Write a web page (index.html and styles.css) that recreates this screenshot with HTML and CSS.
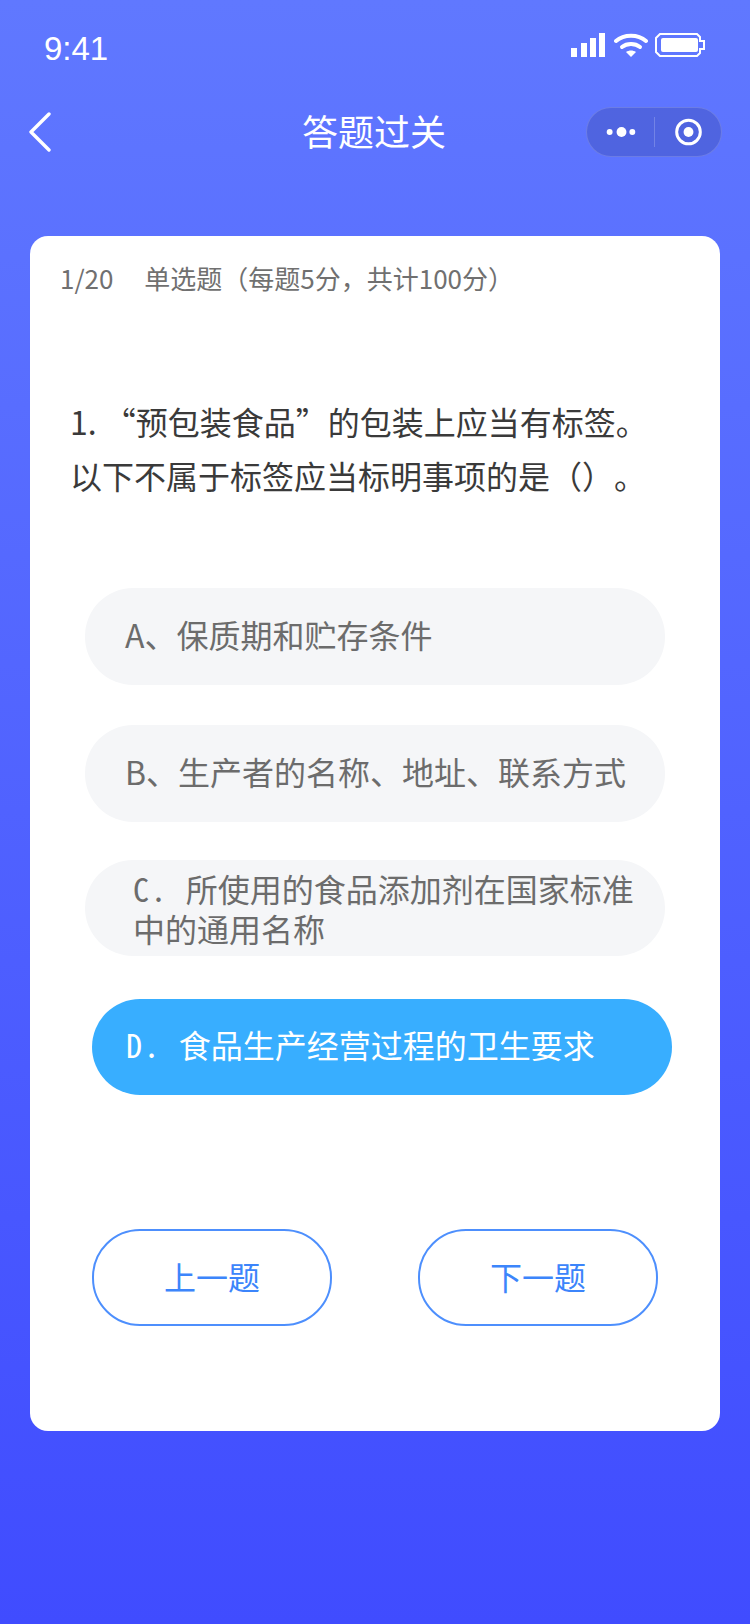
FILE: index.html
```html
<!DOCTYPE html>
<html>
    <head>
        <meta charset="UTF-8">
        <link rel="stylesheet" href="styles.css">
        <title>答题过关</title>
    </head>
    <body>
        <div class="status-bar">
            <span class="status-time">9:41</span>
            <div class="status-icons">
                <svg width="35" height="24" viewBox="0 0 35 24">
                    <rect x="0" y="15" width="6" height="9" fill="#fff" />
                    <rect x="10" y="10" width="6" height="14" fill="#fff" />
                    <rect x="19" y="5" width="6" height="19" fill="#fff" />
                    <rect x="28" y="0" width="6" height="24" fill="#fff" />
                </svg>
                <svg width="34" height="24" viewBox="0 0 34 24">
                    <path d="M2 8 C10 1 24 1 32 8" fill="none" stroke="#fff" stroke-width="4" stroke-linecap="round" />
                    <path d="M8 14 C13 10 21 10 26 14" fill="none" stroke="#fff" stroke-width="4" stroke-linecap="round" />
                    <path d="M12 19 C15 17 19 17 22 19 L17 24 Z" fill="#fff" />
                </svg>
                <svg width="50" height="24" viewBox="0 0 50 24">
                    <path d="M5 1 H42 L45 4 V8 H49 V16 H45 V20 L42 23 H5 L1 19 V5 Z" fill="none" stroke="#fff" stroke-width="2" />
                    <rect x="6" y="5" width="37" height="14" rx="2" fill="#fff" />
                </svg>
            </div>
        </div>

        <div class="nav-bar">
            <svg class="nav-back" width="22" height="40" viewBox="0 0 22 40">
                <path d="M20 2 L2 20 L20 38" fill="none" stroke="#fff" stroke-width="3.4" stroke-linecap="round" stroke-linejoin="round" />
            </svg>
            <div class="nav-title">答题过关</div>
            <div class="capsule">
                <svg width="68" height="48" viewBox="0 0 68 48">
                    <circle cx="23" cy="24" r="3" fill="#fff" />
                    <circle cx="35" cy="24" r="5" fill="#fff" />
                    <circle cx="46" cy="24" r="3" fill="#fff" />
                </svg>
                <div class="capsule-line"></div>
                <svg width="67" height="48" viewBox="0 0 67 48">
                    <circle cx="34" cy="24" r="12" fill="none" stroke="#fff" stroke-width="3" />
                    <circle cx="34" cy="24" r="5" fill="#fff" />
                </svg>
            </div>
        </div>

        <div class="card">
            <div class="quiz-info">
                <span class="quiz-index">1/20</span>
                <span>单选题（每题5分，共计100分）</span>
            </div>
            <div class="question">1. “预包装食品”的包装上应当有标签。<br />以下不属于标签应当标明事项的是（）。</div>
            <div class="options">
                <div class="option">A、保质期和贮存条件</div>
                <div class="option">B、生产者的名称、地址、联系方式</div>
                <div class="option option-long">
                    <div><span class="option-letter">C. </span>所使用的食品添加剂在国家标准</div>
                    <div>中的通用名称</div>
                </div>
                <div class="option option-active"><span class="option-letter">D. </span>食品生产经营过程的卫生要求</div>
            </div>
            <div class="actions">
                <div class="action-btn">上一题</div>
                <div class="action-btn">下一题</div>
            </div>
        </div>
    </body>
</html>
```

FILE: styles.css
```css
* {
    box-sizing: border-box;
}

html, body {
    margin: 0;
    height: 1624px;
}

body {
    overflow: hidden;
    background: linear-gradient(180deg, #6078ff 0%, #404cff 100%);
    font-family: "Noto Sans CJK SC", "Noto Sans", sans-serif;
    text-spacing-trim: space-all;
}

/* 状态栏 */
.status-bar {
    height: 88px;
    padding: 33px 45px 0 44px;
    display: flex;
    justify-content: space-between;
    align-items: flex-start;
}

.status-time {
    color: #fff;
    font-family: "Liberation Sans", sans-serif;
    font-size: 33px;
    line-height: 32px;
}

.status-icons {
    display: flex;
    gap: 7.5px;
}

/* 导航栏 */
.nav-bar {
    height: 50px;
    margin-top: 17px;
    padding: 0 28px 0 29px;
    display: grid;
    grid-template-columns: 1fr auto 1fr;
    align-items: center;
}

.nav-title {
    padding: 0 3px 3px 0;
    color: #fff;
    font-size: 36px;
    line-height: 50px;
}

.capsule {
    justify-self: end;
    width: 136px;
    height: 50px;
    display: flex;
    align-items: center;
    background: rgba(40, 50, 130, 0.25);
    border: 1px solid rgba(255, 255, 255, 0.16);
    border-radius: 25px;
}

.capsule-line {
    width: 1px;
    height: 30px;
    background: rgba(255, 255, 255, 0.2);
}

/* 卡片 */
.card {
    width: 690px;
    height: 1195px;
    margin: 81px 0 0 30px;
    padding-top: 22px;
    background: #fff;
    border-radius: 18px;
}

.quiz-info {
    padding-left: 30px;
    color: #707070;
    font-size: 26px;
    line-height: 40px;
}

.quiz-index {
    margin-right: 25px;
}

.question {
    margin-top: 96px;
    padding: 0 20px 0 40px;
    color: #3a3a3a;
    font-size: 32px;
    line-height: 54px;
}

.options {
    margin-top: 86px;
    padding-left: 55px;
}

.option {
    width: 580px;
    height: 97px;
    margin-bottom: 40px;
    padding: 0 20px 6px 40px;
    display: flex;
    align-items: center;
    background: #f5f6f8;
    border-radius: 48px;
    color: #6c6c6c;
    font-size: 32px;
}

.option-long {
    display: block;
    height: 96px;
    margin-top: -2px;
    padding: 8px 20px 0 48px;
    line-height: 40px;
}

.option-letter {
    display: inline-block;
    font-family: "Noto Sans Mono CJK SC", "DejaVu Sans Mono", monospace;
    letter-spacing: 1.6px;
    line-height: 40px;
    white-space: pre;
}

.option-active {
    height: 96px;
    margin: 43px 0 0 7px;
    padding-left: 34px;
    background: #38aeff;
    color: #fff;
}

/* 底部按钮 */
.actions {
    margin-top: 134px;
    padding: 0 62px;
    display: flex;
    justify-content: space-between;
}

.action-btn {
    width: 240px;
    height: 97px;
    padding-bottom: 4px;
    display: flex;
    align-items: center;
    justify-content: center;
    border: 2px solid #4d8ffd;
    border-radius: 48px;
    color: #3c85fb;
    font-size: 32px;
}
```
